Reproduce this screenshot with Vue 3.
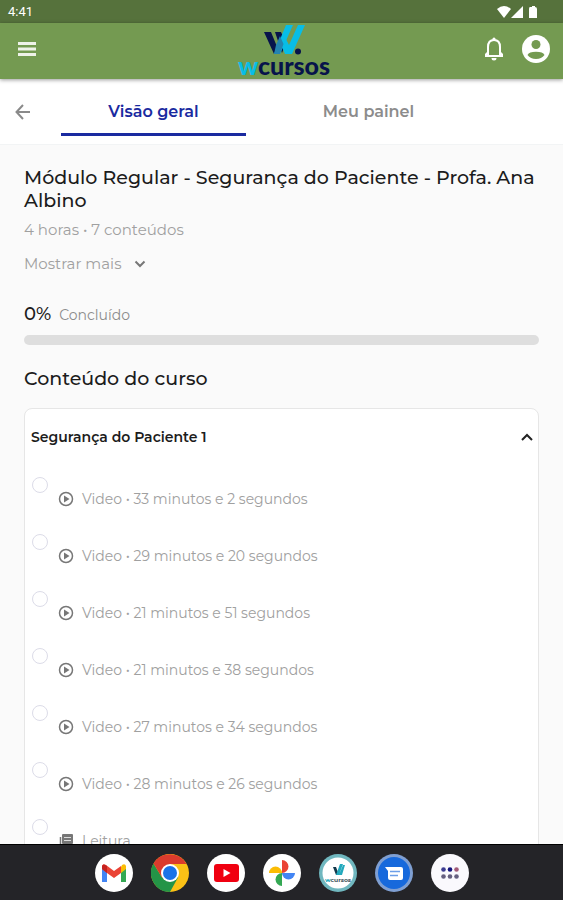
<template>
  <div class="app">
    <div class="status-bar">
      <span>4:41</span>
      <svg class="status-icons" viewBox="0 0 42 14" fill="#fff" aria-hidden="true">
        <path d="M0 4Q7-2 14 4L7 13Z" />
        <path d="M26 1V13H14Z" />
        <path d="M33 2H35V1H38V2Q40 2 40 4V13H32V4Q32 2 33 2Z" />
      </svg>
    </div>

    <header class="top-bar">
      <button type="button" class="icon-button" aria-label="Menu">
        <svg width="18" height="14" viewBox="0 0 18 14" fill="#eef2e8">
          <path d="M0 0H18V3H0ZM0 5.5H18V8.5H0ZM0 11H18V14H0Z" />
        </svg>
      </button>
      <a href="#" class="logo" aria-label="wcursos">
        <svg width="44" height="32" viewBox="0 0 44 32" aria-hidden="true">
          <path d="M2 9H9L18 31H12ZM13 9H19L24 20L20 30Z" fill="#07134b" />
          <path d="M24 2H31L18 31H12Z" fill="#08bde6" />
          <path d="M36 2H43L30 31H23L20 24L24 16L27 22Z" fill="#08bde6" />
          <path d="M14 22L18 13L21.500 21L18 31H12Z" fill="#2484b0" />
          <circle cx="36" cy="28.500" r="3" fill="#07134b" />
        </svg>
        <span class="logo-name"><span class="logo-accent">w</span>cursos</span>
      </a>
      <div class="top-actions">
        <button type="button" class="icon-button" aria-label="Notificações">
          <svg width="20" height="24" viewBox="0 0 20 24">
            <path d="M4 18V10C4 6 6 3 10 3S16 6 16 10V18" fill="none" stroke="#fff" stroke-width="2" />
            <path d="M8.500 3V1.500Q10-.5 11.500 1.500V3ZM3 15L1 17V20H19V17L17 15V18H3ZM7.500 21H12.500Q12.500 23.500 10 23.500T7.500 21Z" fill="#fff" />
          </svg>
        </button>
        <button type="button" class="icon-button" aria-label="Perfil">
          <svg width="28" height="28" viewBox="0 0 28 28">
            <circle cx="14" cy="14" r="14" fill="#fff" />
            <circle cx="14" cy="9.500" r="4.500" fill="#749a51" />
            <path d="M5.500 20Q7 16.800 14 16.800T22.500 20Q19.500 24 14 24T5.500 20Z" fill="#749a51" />
          </svg>
        </button>
      </div>
    </header>

    <nav class="tabs">
      <button type="button" class="back" aria-label="Voltar">
        <svg width="16" height="16" viewBox="0 0 16 16" fill="none" stroke="#8a8a8a" stroke-width="2">
          <path d="M15 8H2M8 1L1.500 8L8 15" />
        </svg>
      </button>
      <button
        v-for="tab in tabs"
        :key="tab"
        type="button"
        :class="['tab', { active: tab === activeTab }]"
        @click="activeTab = tab"
      >
        {{ tab }}
      </button>
    </nav>

    <main class="content">
      <h1>Módulo Regular - Segurança do Paciente - Profa. Ana Albino</h1>
      <p class="summary">4 horas • 7 conteúdos</p>
      <button type="button" class="show-more">
        Mostrar mais
        <svg width="12" height="8" viewBox="0 0 12 8" fill="none" stroke="#777" stroke-width="2">
          <path d="M1.500 1.500L6 6L10.500 1.500" />
        </svg>
      </button>

      <div class="progress-label">
        <strong>{{ progress }}%</strong>
        <span>Concluído</span>
      </div>
      <div class="progress" role="progressbar" aria-label="Concluído" :aria-valuenow="progress">
        <div class="progress-fill" :style="{ width: progress + '%' }"></div>
      </div>

      <h2>Conteúdo do curso</h2>

      <section class="card">
        <button type="button" class="card-header" @click="open = !open">
          Segurança do Paciente 1
          <svg width="12" height="8" viewBox="0 0 12 8" fill="none" stroke="#222" stroke-width="2">
            <path d="M1 7L6 2L11 7" />
          </svg>
        </button>
        <ul v-if="open" class="lessons">
          <li v-for="(lesson, index) in lessons" :key="index">
            <input :id="'lesson-' + index" v-model="lesson.done" type="checkbox" />
            <label :for="'lesson-' + index">
              <svg v-if="lesson.video" width="16" height="16" viewBox="0 0 16 16">
                <circle cx="8" cy="8" r="6.500" fill="none" stroke="#777" stroke-width="1.500" />
                <path d="M6 4.500L11.500 8L6 11.500Z" fill="#777" />
              </svg>
              <svg v-else width="16" height="16" viewBox="0 0 16 16">
                <rect x="4" y="1" width="11" height="10" rx="1" fill="#777" />
                <path d="M6 4.500H13M6 7.500H13" stroke="#ddd" />
                <path d="M2.500 4V13.500H12" fill="none" stroke="#777" stroke-width="1.500" />
              </svg>
              {{ lesson.text }}
            </label>
          </li>
        </ul>
      </section>
    </main>

    <footer class="dock">
      <button type="button" aria-label="Gmail">
        <svg viewBox="0 0 38 38">
          <circle cx="19" cy="19" r="19" fill="#fff" />
          <path d="M7 13V28H12V16Z" fill="#4285f4" />
          <path d="M26 16V28H31V13Z" fill="#34a853" />
          <path d="M26 13V19L31 15V12Q30 9 27 11Z" fill="#fbbc04" />
          <path d="M7 15V12Q8 9 11 11L19 17L26 12V19L19 24L12 19Z" fill="#ea4335" />
          <path d="M7 12V15L12 19V12Q8 9 7 12Z" fill="#c5221f" />
        </svg>
      </button>
      <button type="button" aria-label="Chrome">
        <svg viewBox="0 0 38 38">
          <circle cx="19" cy="19" r="19" fill="#fbc116" />
          <path d="M19 19L27 23.500L19 38A19 19 0 0 1 2.500 9.500L11 23.500Z" fill="#249447" />
          <path d="M2.500 9.500A19 19 0 0 1 35.500 10H19L11 23.500Z" fill="#db3b2d" />
          <circle cx="19" cy="19" r="9" fill="#fff" />
          <circle cx="19" cy="19" r="7" fill="#1a73e8" />
        </svg>
      </button>
      <button type="button" aria-label="YouTube">
        <svg viewBox="0 0 38 38">
          <circle cx="19" cy="19" r="19" fill="#fff" />
          <rect x="7" y="10" width="25" height="18" rx="3" fill="#f00010" />
          <path d="M16.500 15L23.500 19L16.500 23Z" fill="#fff" />
        </svg>
      </button>
      <button type="button" aria-label="Fotos">
        <svg viewBox="0 0 38 38">
          <circle cx="19" cy="19" r="19" fill="#fff" />
          <path d="M19 19H6A6.500 6.500 0 0 1 19 19Z" fill="#fbbc04" />
          <path d="M19 19V6A6.500 6.500 0 0 1 19 19Z" fill="#ea4335" />
          <path d="M19 19H32A6.500 6.500 0 0 1 19 19Z" fill="#4285f4" />
          <path d="M19 19V32A6.500 6.500 0 0 1 19 19Z" fill="#34a853" />
        </svg>
      </button>
      <button type="button" aria-label="wcursos">
        <svg viewBox="0 0 38 38">
          <circle cx="19" cy="19" r="19" fill="#70b7bf" />
          <circle cx="19" cy="19" r="15.500" fill="#fff" />
          <path d="M14 13H17L20 21H17Z" fill="#12384b" />
          <path d="M21 10H24L20 21H17ZM24 11H26L23 21H20Z" fill="#22a9bd" />
          <text x="19" y="28" text-anchor="middle" class="badge-text"><tspan fill="#22a9bd">w</tspan>cursos</text>
        </svg>
      </button>
      <button type="button" aria-label="Mensagens">
        <svg viewBox="0 0 38 38">
          <circle cx="19" cy="19" r="19" fill="#7f9fd2" />
          <circle cx="19" cy="19" r="16" fill="#1769dc" />
          <path d="M10 13H26Q28 13 28 15V24Q28 26 26 26H15Q13 26 13 24V17Z" fill="#fff" />
          <path d="M15 17.500H25M15 21.500H23" stroke="#6b9ee8" stroke-width="1.500" />
        </svg>
      </button>
      <button type="button" aria-label="Todos os apps">
        <svg viewBox="0 0 38 38" fill="#666080">
          <circle cx="19" cy="19" r="19" fill="#faf9fd" />
          <circle cx="12.500" cy="15.500" r="2.300" fill="#3c3c91" />
          <circle cx="19" cy="15.500" r="2.300" fill="#14147e" />
          <circle cx="25.500" cy="15.500" r="2.300" fill="#a25a78" />
          <circle cx="12.500" cy="22.500" r="2.300" />
          <circle cx="19" cy="22.500" r="2.300" />
          <circle cx="25.500" cy="22.500" r="2.300" />
        </svg>
      </button>
    </footer>
  </div>
</template>

<script setup>
import { ref } from 'vue'

const tabs = ['Visão geral', 'Meu painel']
const activeTab = ref('Visão geral')
const progress = ref(0)
const open = ref(true)

const lessons = ref([
  { text: 'Video • 33 minutos e 2 segundos', video: true, done: false },
  { text: 'Video • 29 minutos e 20 segundos', video: true, done: false },
  { text: 'Video • 21 minutos e 51 segundos', video: true, done: false },
  { text: 'Video • 21 minutos e 38 segundos', video: true, done: false },
  { text: 'Video • 27 minutos e 34 segundos', video: true, done: false },
  { text: 'Video • 28 minutos e 26 segundos', video: true, done: false },
  { text: 'Leitura', video: false, done: false }
])
</script>

<style>
body {
  margin: 0;
}
</style>

<style scoped>
.app {
  display: flex;
  flex-direction: column;
  height: 100vh;
  background: #fafafa;
  color: #1c1c1c;
  font-family: Montserrat, Inter, sans-serif;
}

button {
  padding: 0;
  border: 0;
  background: none;
  color: inherit;
  font-family: inherit;
  cursor: pointer;
}

svg {
  display: block;
  flex-shrink: 0;
}

.status-bar {
  display: flex;
  align-items: center;
  justify-content: space-between;
  flex-shrink: 0;
  height: 23px;
  padding: 0 24px 0 8px;
  background: #56723c;
  color: #fff;
  font-family: Roboto, sans-serif;
  font-size: 13px;
}

.status-icons {
  width: 42px;
  height: 14px;
}

.top-bar {
  display: grid;
  grid-template-columns: 1fr auto 1fr;
  align-items: center;
  flex-shrink: 0;
  box-sizing: border-box;
  height: 56px;
  padding: 0 13px 4px 18px;
  background: #749a51;
  box-shadow: 0 1px 4px rgba(0, 0, 0, 0.4);
  z-index: 1;
}

.icon-button {
  justify-self: start;
}

.logo {
  display: flex;
  flex-direction: column;
  align-items: center;
  color: #07134b;
  text-decoration: none;
}

.logo-name {
  font-family: Lato, sans-serif;
  font-size: 25px;
  font-weight: 900;
  line-height: 20px;
}

.logo-accent {
  color: #08bde6;
}

.top-actions {
  display: flex;
  align-items: center;
  justify-content: flex-end;
  gap: 18px;
}

.tabs {
  display: grid;
  grid-template-columns: 46px 1fr 1fr;
  flex-shrink: 0;
  height: 66px;
  padding-right: 87px;
  background: #fff;
  border-bottom: 1px solid #f2f4f5;
  box-sizing: border-box;
}

.back {
  padding-left: 15px;
}

.tab {
  height: 57px;
  margin: 0 15px;
  padding-top: 10px;
  border-bottom: 3px solid transparent;
  color: #8c8c8c;
  font-size: 16px;
  font-weight: 600;
}

.tab.active {
  border-color: #1a2aa0;
  color: #1a2aa0;
}

.content {
  flex: 1;
  min-height: 0;
  padding: 21px 24px 0;
  overflow: hidden;
}

h1,
h2 {
  margin: 0;
  font-size: 19px;
  font-weight: 500;
  line-height: 23px;
}

.summary {
  margin: 7px 0 0;
  color: #a0a0a0;
  font-size: 15px;
  line-height: 22px;
}

.show-more {
  display: flex;
  align-items: center;
  gap: 13px;
  margin-top: 12px;
  color: #a0a0a0;
  font-size: 15px;
  line-height: 22px;
}

.progress-label {
  display: flex;
  align-items: baseline;
  gap: 8px;
  margin-top: 27px;
  line-height: 24px;
}

.progress-label strong {
  font-size: 18px;
  font-weight: 500;
}

.progress-label span {
  color: #8c8c8c;
  font-size: 14px;
}

.progress {
  height: 10px;
  margin: 8px 0 22px;
  border-radius: 5px;
  background: #dedede;
  overflow: hidden;
}

.progress-fill {
  height: 100%;
  background: #1a2aa0;
}

.card {
  margin-top: 18px;
  border: 1px solid #e6e6e6;
  border-radius: 8px;
  background: #fff;
}

.card-header {
  display: flex;
  align-items: center;
  justify-content: space-between;
  width: 100%;
  height: 56px;
  padding: 0 5px 0 6px;
  font-size: 14px;
  font-weight: 600;
}

.lessons {
  margin: 0;
  padding: 12px 7px 0;
  list-style: none;
}

.lessons li {
  display: flex;
  gap: 10px;
  height: 57px;
}

.lessons input {
  flex-shrink: 0;
  width: 16px;
  height: 16px;
  margin: 0;
  border: 1px solid #dcdce8;
  border-radius: 50%;
  appearance: none;
}

.lessons input:checked {
  background: #1a2aa0;
}

.lessons label {
  display: flex;
  align-items: center;
  gap: 8px;
  height: 20px;
  margin-top: 12px;
  color: #a0a0a0;
  font-size: 14px;
}

.dock {
  display: flex;
  align-items: center;
  justify-content: center;
  gap: 18px;
  flex-shrink: 0;
  height: 56px;
  background: #242428;
  border-top: 1px solid #000;
  box-sizing: border-box;
}

.dock svg {
  width: 38px;
  height: 38px;
}

.badge-text {
  fill: #44545c;
  font-size: 6px;
  font-weight: 700;
}
</style>
